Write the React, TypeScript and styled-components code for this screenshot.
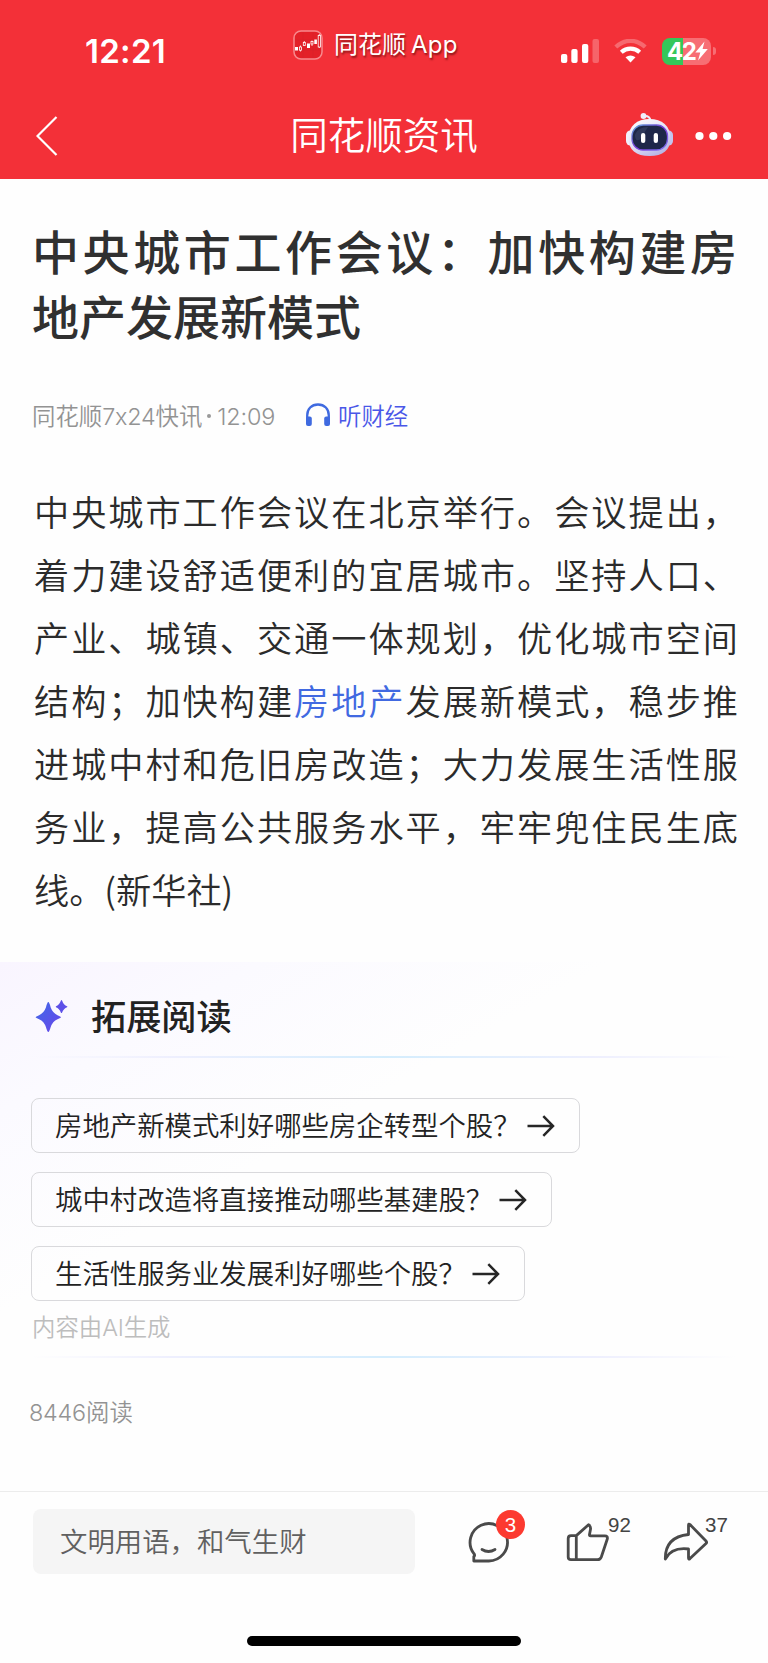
import React from "react";
import styled, { createGlobalStyle } from "styled-components";

const cjk = `"Noto Sans CJK SC", sans-serif`;

const GlobalStyle = createGlobalStyle`
  * { box-sizing: border-box; }
  body { margin: 0; background: #fff; font-family: ${cjk}; color: #333; }
  svg { display: block; flex: none; }
`;

const Page = styled.div`
  width: 768px;
  height: 1663px;
  display: flex;
  flex-direction: column;
  overflow: hidden;
  background: #fefefe;
`;

const Header = styled.header`
  height: 179px;
  flex: none;
  background: #f33038;
  color: #fff;
`;

const StatusBar = styled.div`
  height: 93px;
  display: grid;
  grid-template-columns: 293px 1fr 219px;
`;

const Clock = styled.div`
  font: 600 33px/40px Inter, sans-serif;
  letter-spacing: 0.3px;
  padding: 31px 0 0 85px;
`;

const AppLabel = styled.div`
  display: flex;
  height: 89px;
  align-items: center;
  gap: 11px;
  font-size: 24px;
  text-shadow: 1px 2px 2px rgba(70, 0, 0, 0.6);
`;

const AppName = styled.div`
  margin-top: -4px;
  span { font-family: Inter, sans-serif; font-size: 24px; margin-left: 5px; letter-spacing: 0.2px; }
`;

const StatusIcons = styled.div`
  display: flex;
  height: 102px;
  align-items: center;
  padding-left: 12px;
`;

const Battery = styled.div`
  display: flex;
  align-items: center;
  gap: 2px;
  margin-left: 15px;
`;

const BatteryBody = styled.div`
  width: 49px;
  height: 27px;
  border-radius: 8px;
  display: flex;
  align-items: center;
  padding-left: 5px;
  font: 700 24px/27px Inter, sans-serif;
  letter-spacing: -1.6px;
  background: linear-gradient(90deg, #34c759 21px, #f76e74 21px);
`;

const BatteryTip = styled.div`
  width: 3px;
  height: 8px;
  border-radius: 0 4px 4px 0;
  background: #f76e74;
`;

const NavBar = styled.div`
  height: 85px;
  display: grid;
  grid-template-columns: 1fr auto 1fr;
  align-items: center;
  padding: 0 36px;
`;

const NavTitle = styled.h1`
  margin: -5px 0 0;
  font-size: 37.5px;
  font-weight: 350;
  line-height: 50px;
`;

const NavActions = styled.div`
  display: flex;
  align-items: center;
  justify-content: flex-end;
  gap: 22px;
`;

const Article = styled.article`
  height: 783px;
  flex: none;
  padding: 38px 31px 0 33px;
`;

const Headline = styled.h2`
  margin: 0 0 0 -1px;
  font-size: 47px;
  font-weight: 500;
  line-height: 65px;
  color: #303030;
`;

const Line = styled.div<{ $justify?: boolean }>`
  white-space: nowrap;
  text-align-last: ${(p) => (p.$justify ? "justify" : "left")};
`;

const Latin = styled.span`
  font-family: Inter, sans-serif;
  font-size: 23.4px;
  font-weight: 300;
  letter-spacing: -0.2px;
`;

const Meta = styled.div`
  display: flex;
  align-items: center;
  height: 40px;
  margin: 48px 0 0 -1px;
  font-size: 23.4px;
  font-weight: 350;
  color: #939393;
`;

const Source = styled.div`
  width: 273px;
  line-height: 36px;
  padding-top: 1px;
`;

const Dot = styled.span`
  display: inline-block;
  width: 4px;
  height: 4px;
  border-radius: 50%;
  margin: 0 6px 7px 5px;
  background: #999;
`;

const Listen = styled.div`
  display: flex;
  align-items: center;
  gap: 7px;
  font-size: 23.4px;
  line-height: 36px;
  color: #4a57e8;
`;

const Body = styled.div`
  margin: 44px -1px 0 1px;
  font-size: 35.2px;
  font-weight: 350;
  line-height: 63px;
  color: #2b2b2b;
`;

const Keyword = styled.span`
  color: #4169e1;
`;

const Extended = styled.section`
  height: 395px;
  flex: none;
  padding: 0 32px;
  background: linear-gradient(150deg, #f9f5ff 0%, #fbfaff 18%, #fefefe 42%);
`;

const ExtHeader = styled.div`
  height: 94px;
  display: flex;
  align-items: center;
  gap: 23px;
  padding: 11px 0 0 3px;
  font-size: 35.2px;
  font-weight: 500;
  color: #222;
  svg { margin-top: 2px; }
`;

const Divider = styled.div`
  height: 2px;
  background: linear-gradient(90deg, transparent, #eeeffe 20%, #d4edfd 50%, #eeeffe 80%, transparent);
`;

const Chips = styled.div`
  display: flex;
  flex-direction: column;
  align-items: flex-start;
  gap: 19px;
  padding-top: 40px;
  margin-left: -1px;
`;

const Chip = styled.button`
  display: flex;
  align-items: center;
  gap: 6px;
  height: 55px;
  padding: 0 24px 4px 23px;
  border: 1.5px solid #d9d9dc;
  border-radius: 8px;
  background: transparent;
  font: 350 27.4px/40px ${cjk};
  color: #222;
  svg { margin-top: 4px; }
`;

const AiNote = styled.div`
  height: 55px;
  line-height: 51px;
  font-size: 23.4px;
  font-weight: 350;
  color: #bdbdbd;
`;

const Reads = styled.div`
  height: 134px;
  flex: none;
  padding: 37px 29px 0;
  font-size: 23.4px;
  font-weight: 350;
  line-height: 35px;
  color: #939393;
`;

const Footer = styled.footer`
  flex: 1;
  border-top: 1px solid #ececec;
  display: flex;
  flex-direction: column;
`;

const Actions = styled.div`
  display: flex;
  height: 101px;
  padding: 17px 0 0 33px;
`;

const Input = styled.div`
  width: 382px;
  height: 65px;
  border-radius: 8px;
  background: #f5f5f5;
  padding-left: 27px;
  font-size: 27.4px;
  font-weight: 350;
  line-height: 62px;
  color: #606060;
`;

const Action = styled.div<{ $left: number }>`
  position: relative;
  margin-left: ${(p) => p.$left}px;
  width: 46px;
  padding-top: 11px;
`;

const Badge = styled.span`
  position: absolute;
  left: 28px;
  top: 1px;
  width: 29px;
  height: 29px;
  border-radius: 50%;
  background: #fc3a30;
  color: #fff;
  text-align: center;
  font: 400 20.5px/29px "Liberation Sans", sans-serif;
`;

const Count = styled.span`
  position: absolute;
  left: 42px;
  top: 4px;
  font: 400 20.5px/24px "Liberation Sans", sans-serif;
  color: #444;
`;

const HomeBar = styled.div`
  width: 274px;
  height: 10px;
  margin: 43px auto 0;
  border-radius: 5px;
  background: #000;
`;

const AppIcon = () => (
  <svg width="30" height="30" viewBox="0 0 30 30">
    <rect x="1" y="1" width="28" height="28" rx="7" fill="#e32028" stroke="#f8898d" strokeWidth="1.5" />
    <path d="M2 10H28M2 20H28M10 2V28M20 2V28" stroke="#d3202a" strokeWidth=".5" />
    <g fill="#fff">
      <rect x="2" y="17" width="3" height="3.5" />
      <rect x="14" y="13.5" width="3" height="4.5" />
      <rect x="21.3" y="9.5" width="2.6" height="4.5" />
    </g>
    <g fill="none" stroke="#fff" strokeWidth=".8">
      <rect x="6.5" y="17" width="2" height="3.2" />
      <rect x="10.3" y="12.5" width="2" height="3" />
      <rect x="18" y="11.5" width="2" height="2.5" />
      <rect x="25.2" y="5.5" width="2.2" height="11.5" />
      <path d="M7.5 15.5V17M7.5 20.2V21.500M11.3 11V12.5M19 10.5V11.500M19 14V16M26.3 4V5.500M26.300 17V18" />
    </g>
  </svg>
);

const Signal = () => (
  <svg width="38" height="24" viewBox="0 0 38 24" fill="#fff">
    <rect x="0" y="15" width="6.3" height="9" rx="2" />
    <rect x="10.3" y="10" width="6.3" height="14" rx="2" />
    <rect x="21" y="5" width="6.3" height="19" rx="2" />
    <rect x="31.5" y="0" width="6.5" height="24" rx="2" fillOpacity=".25" />
  </svg>
);

const WifiIcon = styled.svg`
  margin-left: 15px;
`;

const Wifi = () => (
  <WifiIcon width="33" height="24" viewBox="0 0 33 24">
    <path d="M1.8 8Q8.500 1.800 16.500 1.800T31.200 8" fill="none" stroke="#fff" strokeOpacity=".28" strokeWidth="4.200" />
    <path d="M7.300 13.300Q11.300 9.700 16.500 9.700T25.700 13.300" fill="none" stroke="#fff" strokeWidth="4.200" />
    <path d="M11.500 18.200Q16.500 14.600 21.500 18.200L16.500 23.500Z" fill="#fff" />
  </WifiIcon>
);

const Bolt = () => (
  <svg width="13" height="20" viewBox="0 0 13 20">
    <path d="M9.500 0.500L0.300 11.500H5.300L3 19.500L12.800 8H7.600Z" fill="#fff" />
  </svg>
);

const Robot = () => (
  <svg width="47" height="46" viewBox="0 0 47 46">
    <defs>
      <linearGradient id="shell" x1="0" y1="0" x2="0.600" y2="1">
        <stop offset="0" stopColor="#fff" />
        <stop offset=".6" stopColor="#e3e0f6" />
        <stop offset="1" stopColor="#b9b8e6" />
      </linearGradient>
      <linearGradient id="rim" x1="0" y1="0" x2="1" y2="1">
        <stop offset="0" stopColor="#5fa9d8" />
        <stop offset=".5" stopColor="#7a39d8" />
        <stop offset="1" stopColor="#7d78f0" />
      </linearGradient>
    </defs>
    <path d="M18 3Q24 2.500 24.500 8" fill="none" stroke="#eceaf8" strokeWidth="2" />
    <circle cx="17.500" cy="3" r="2.900" fill="#f0eefb" />
    <rect x="0" y="17.500" width="9" height="15" rx="4.500" fill="#f1f0fc" />
    <rect x="38" y="17.500" width="9" height="15" rx="4.500" fill="#c4c4ee" />
    <path d="M23.500 6C36 6 44.500 13 44.500 25C44.500 37 37 43 23.500 43S2.500 37 2.500 25C2.500 13 11 6 23.500 6Z" fill="url(#shell)" />
    <rect x="6" y="12" width="35.500" height="25" rx="11" fill="#1e2749" stroke="url(#rim)" strokeWidth="1.300" />
    <path d="M9 21.500Q12 14 22 14L14 26.500Q9 29.500 9 21.500Z" fill="#3a4668" opacity=".6" />
    <rect x="15" y="20" width="4.300" height="10" rx="2.100" fill="#fff" />
    <rect x="27.700" y="20" width="4.300" height="10" rx="2.100" fill="#fff" />
  </svg>
);

const Headphones = () => (
  <svg width="26" height="24" viewBox="0 0 26 24">
    <path d="M2.200 20V12.500C2.200 6 6.500 1.500 13 1.500S23.800 6 23.800 12.500V20" fill="none" stroke="#3f6ae0" strokeWidth="2.300" />
    <rect x="1" y="13.500" width="5.800" height="9.500" rx="2" fill="#3f6ae0" />
    <rect x="19.200" y="13.500" width="5.800" height="9.500" rx="2" fill="#3f6ae0" />
  </svg>
);

const Sparkles = () => (
  <svg width="33" height="33" viewBox="0 0 33 33">
    <defs>
      <linearGradient id="spark" x1="0" y1="0" x2="1" y2="1">
        <stop offset="0" stopColor="#3f6ae8" />
        <stop offset="1" stopColor="#6a45ea" />
      </linearGradient>
    </defs>
    <path d="M13.300 3Q14.300 3 15.700 8.500Q17.500 13.700 22.500 16.200Q26 17.600 26 18.200T22.500 20.200Q17.500 22.500 15.700 28Q14.300 33 13.300 33T10.900 28Q9.100 22.500 4.100 20.200Q.6 18.800 .6 18.200T4.100 16.200Q9.100 13.700 10.900 8.500Q12.300 3 13.300 3Z" fill="url(#spark)" />
    <path d="M26.500 1C27.500 1 27.500 5.500 32 7.200C32.500 7.500 32.500 8 32 8.200C27.500 10 27.500 14 26.500 14S25.500 10 21 8.200C20.700 8 20.700 7.500 21 7.200C25.500 5.500 25.500 1 26.500 1Z" fill="#5d50e8" />
  </svg>
);

const Arrow = () => (
  <svg width="28" height="22" viewBox="0 0 28 22" fill="none" stroke="#262626" strokeWidth="2.500">
    <path d="M.5 11H26M16.300 1.200L26 11L16.300 20.800" />
  </svg>
);

const CommentIcon = () => (
  <svg width="42" height="44" viewBox="0 0 42 44" fill="none" stroke="#4a4a4a" strokeWidth="2.800" strokeLinejoin="round" strokeLinecap="round">
    <path d="M20.500 41H5.800V36.500Q7.500 35.500 5.800 33.500A18.700 18.700 0 1 1 20.500 41Z" />
    <path d="M14 29.500Q20.500 33.500 27 29.500" />
  </svg>
);

const ThumbIcon = () => (
  <svg width="44" height="44" viewBox="0 0 44 44" fill="none" stroke="#4a4a4a" strokeWidth="2.800" strokeLinejoin="round">
    <path d="M10.300 15.600H5Q2.200 15.600 2.200 18.500V37Q2.200 39.700 5 39.700H31.500Q34.300 39.700 35.300 37L41.300 19Q42 15.800 38.800 15.800H24.500Q23.300 15.800 23.500 14.600L24.500 9.300Q25 6.300 22.500 4.800L10.300 15.600ZM10.300 15.600V39.500" />
  </svg>
);

const ShareIcon = () => (
  <svg width="46" height="44" viewBox="0 0 46 44" fill="none" stroke="#4a4a4a" strokeWidth="2.800" strokeLinejoin="round">
    <path d="M25.500 14.500V5.200Q25.500 3.300 27 4.600L43 21Q44.200 22.300 43 23.600L27 38.600Q25.500 39.900 25.500 38.100V29Q8.500 27 2.300 39Q2 17 25.500 14.500Z" />
  </svg>
);

const bodyLines: React.ReactNode[] = [
  "中央城市工作会议在北京举行。会议提出，",
  "着力建设舒适便利的宜居城市。坚持人口、",
  "产业、城镇、交通一体规划，优化城市空间",
  <>结构；加快构建<Keyword>房地产</Keyword>发展新模式，稳步推</>,
  "进城中村和危旧房改造；大力发展生活性服",
  "务业，提高公共服务水平，牢牢兜住民生底",
  "线。(新华社)",
];

const questions = [
  "房地产新模式利好哪些房企转型个股？",
  "城中村改造将直接推动哪些基建股？",
  "生活性服务业发展利好哪些个股？",
];

export default function App() {
  return (
    <Page>
      <GlobalStyle />
      <Header>
        <StatusBar>
          <Clock>12:21</Clock>
          <AppLabel>
            <AppIcon />
            <AppName>同花顺<span>App</span></AppName>
          </AppLabel>
          <StatusIcons>
            <Signal />
            <Wifi />
            <Battery>
              <BatteryBody>42<Bolt /></BatteryBody>
              <BatteryTip />
            </Battery>
          </StatusIcons>
        </StatusBar>
        <NavBar>
          <svg width="22" height="40" viewBox="0 0 22 40" fill="none" stroke="#fff" strokeWidth="2.200">
            <path d="M20.500 1L1.500 20L20.500 39" />
          </svg>
          <NavTitle>同花顺资讯</NavTitle>
          <NavActions>
            <Robot />
            <svg width="37" height="10" viewBox="0 0 37 10" fill="#fff">
              <circle cx="4.500" cy="5" r="4.100" />
              <circle cx="18.300" cy="5" r="4.100" />
              <circle cx="32.100" cy="5" r="4.100" />
            </svg>
          </NavActions>
        </NavBar>
      </Header>
      <Article>
        <Headline>
          <Line $justify>中央城市工作会议：加快构建房</Line>
          <Line>地产发展新模式</Line>
        </Headline>
        <Meta>
          <Source>
            同花顺<Latin>7x24</Latin>快讯<Dot /><Latin>12:09</Latin>
          </Source>
          <Listen><Headphones />听财经</Listen>
        </Meta>
        <Body>
          {bodyLines.map((l, i) => (
            <Line key={i} $justify={i < bodyLines.length - 1}>{l}</Line>
          ))}
        </Body>
      </Article>
      <Extended>
        <ExtHeader><Sparkles />拓展阅读</ExtHeader>
        <Divider />
        <Chips>
          {questions.map((q) => (
            <Chip key={q}>{q}<Arrow /></Chip>
          ))}
        </Chips>
        <AiNote>内容由<Latin>AI</Latin>生成</AiNote>
        <Divider />
      </Extended>
      <Reads><Latin>8446</Latin>阅读</Reads>
      <Footer>
        <Actions>
          <Input>文明用语，和气生财</Input>
          <Action $left={53}><CommentIcon /><Badge>3</Badge></Action>
          <Action $left={52}><ThumbIcon /><Count>92</Count></Action>
          <Action $left={51}><ShareIcon /><Count>37</Count></Action>
        </Actions>
        <HomeBar />
      </Footer>
    </Page>
  );
}
